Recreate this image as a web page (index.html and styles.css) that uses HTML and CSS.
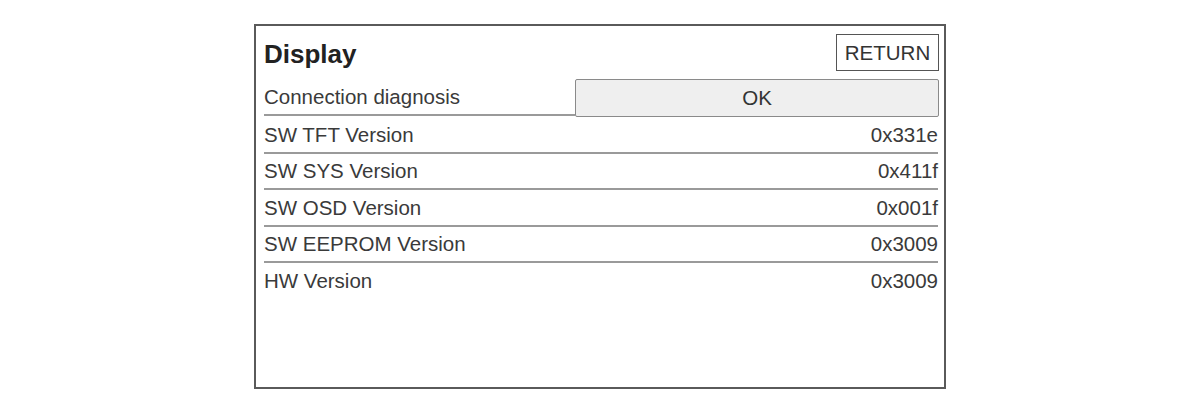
FILE: index.html
```html
<!DOCTYPE html>
<html>
<head>
<meta charset="utf-8">
<link rel="stylesheet" href="styles.css">
</head>
<body>
<div class="panel">
  <div class="header">
    <div class="title">Display</div>
    <div class="return">RETURN</div>
  </div>
  <div class="conn">
    <div class="conn-label">Connection diagnosis</div>
    <div class="ok">OK</div>
  </div>
  <div class="row"><span>SW TFT Version</span><span>0x331e</span></div>
  <div class="row"><span>SW SYS Version</span><span>0x411f</span></div>
  <div class="row"><span>SW OSD Version</span><span>0x001f</span></div>
  <div class="row"><span>SW EEPROM Version</span><span>0x3009</span></div>
  <div class="row last"><span>HW Version</span><span>0x3009</span></div>
</div>
</body>
</html>
```
FILE: styles.css
```css
html, body {
  margin: 0;
  padding: 0;
  background: #fff;
}
body {
  padding-top: 24px;
  font-family: "Liberation Sans", Arial, sans-serif;
  color: #3a3a3a;
}
.panel {
  box-sizing: border-box;
  width: 692px;
  height: 365px;
  margin: 0 auto;
  border: 2px solid #5a5a5a;
  padding: 0 6px 0 8px;
  display: flex;
  flex-direction: column;
}
.header {
  height: 53px;
  display: flex;
  align-items: center;
  justify-content: space-between;
}
.title {
  font-size: 26px;
  font-weight: bold;
  color: #222;
  margin-top: 3px;
}
.return {
  box-sizing: border-box;
  width: 103px;
  height: 37px;
  border: 1.5px solid #555;
  display: flex;
  align-items: center;
  justify-content: center;
  font-size: 20.5px;
  color: #333;
  margin-right: -1px;
}
.conn {
  height: 38px;
  display: flex;
}
.conn-label {
  box-sizing: border-box;
  width: 311px;
  height: 37px;
  border-bottom: 2px solid #9a9a9a;
  font-size: 20.5px;
  display: flex;
  align-items: center;
  padding-top: 1px;
}
.ok {
  box-sizing: border-box;
  flex: 1;
  margin-right: -1px;
  height: 38px;
  background: #efefef;
  border: 1.5px solid #8a8a8a;
  border-radius: 2px;
  display: flex;
  align-items: center;
  justify-content: center;
  font-size: 20.5px;
  color: #333;
}
.row {
  box-sizing: border-box;
  height: 36.5px;
  border-bottom: 2px solid #9a9a9a;
  display: flex;
  align-items: center;
  justify-content: space-between;
  font-size: 20.5px;
  padding-top: 1px;
}
.row.last {
  border-bottom: none;
  height: 34.5px;
}
```
